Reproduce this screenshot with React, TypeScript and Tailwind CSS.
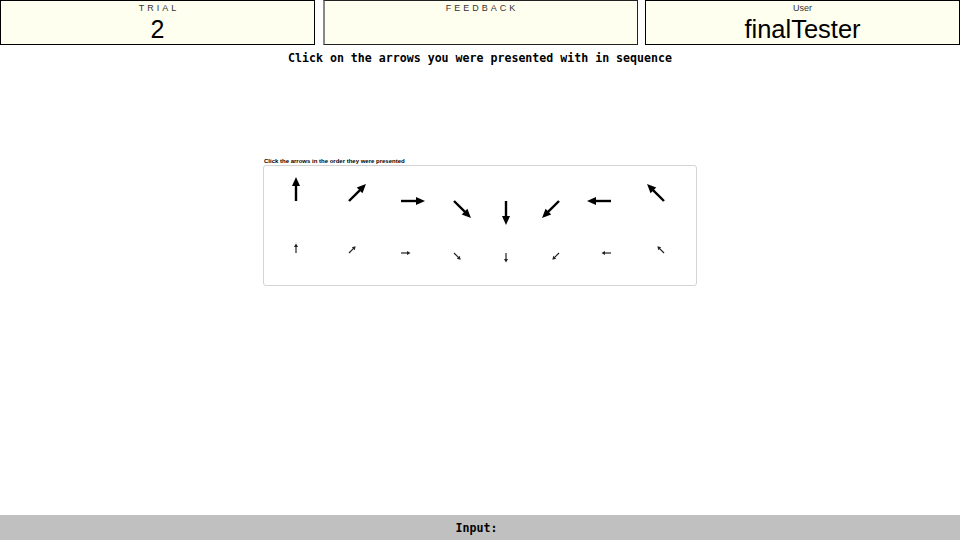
import React from "react";

const angles = [0, 45, 90, 135, 180, 225, 270, 315];

function Arrow({
  angle,
  len,
  head,
  headW,
  stroke,
  w,
  h,
  color,
}: {
  angle: number;
  len: number;
  head: number;
  headW: number;
  stroke: number;
  w: number;
  h: number;
  color: string;
}) {
  return (
    <svg width={w} height={h} viewBox={`${-w / 2} ${-h / 2} ${w} ${h}`}>
      <g transform={`rotate(${angle})`}>
        <line x1={0} y1={0} x2={0} y2={-(len - head + 0.5)} stroke={color} strokeWidth={stroke} />
        <polygon
          points={`0,${-len} ${-headW / 2},${-len + head} ${headW / 2},${-len + head}`}
          fill={color}
        />
      </g>
    </svg>
  );
}

export default function App() {
  return (
    <div className="min-h-screen flex flex-col bg-white" style={{ fontFamily: "'Liberation Sans', Arial, sans-serif" }}>
      <div className="flex justify-between h-[45px]">
        <div className="w-[315px] h-[45px] border border-black bg-[#fffff0] flex flex-col items-center">
          <div className="text-[9px] leading-[12px] tracking-[3px] text-[#333] mt-[1px] pl-[3px]">TRIAL</div>
          <div className="text-[25px] leading-[26px] text-black mt-[2px]">2</div>
        </div>
        <div className="w-[315px] h-[45px] border border-[#222] border-l-2 border-l-[#888] bg-[#fffff0] flex flex-col items-center">
          <div className="text-[9px] leading-[12px] tracking-[3px] text-[#333] mt-[1px] pl-[3px]">FEEDBACK</div>
        </div>
        <div className="w-[315px] h-[45px] border border-black bg-[#fffff0] flex flex-col items-center">
          <div className="text-[9px] leading-[12px] text-[#333] mt-[1px]">User</div>
          <div className="text-[25.5px] leading-[26px] text-black mt-[2px]">finalTester</div>
        </div>
      </div>

      <div
        className="mt-[5px] text-center font-bold text-[11.6px] leading-[16px] text-black"
        style={{ fontFamily: "'DejaVu Sans Mono', 'Liberation Mono', monospace" }}
      >
        Click on the arrows you were presented with in sequence
      </div>

      <div className="mt-[90px] self-center w-[434px]">
        <div className="text-[6px] leading-[8px] pt-[1px] font-bold text-black pl-[1px]">
          Click the arrows in the order they were presented
        </div>
        <div className="border border-[#d4d4d4] rounded-[3px] px-[6px] pt-[10px] pb-[22px]">
          <div className="grid grid-cols-8">
            {angles.map((a) => (
              <div key={"b" + a} className="flex justify-center">
                <Arrow angle={a} len={24} head={9} headW={8} stroke={2.4} w={50} h={50} color="#000" />
              </div>
            ))}
          </div>
          <div className="grid grid-cols-8 mt-[17px]">
            {angles.map((a) => (
              <div key={"s" + a} className="flex justify-center">
                <Arrow angle={a} len={9.5} head={3.5} headW={4} stroke={1.2} w={24} h={20} color="#222" />
              </div>
            ))}
          </div>
        </div>
      </div>

      <div
        className="mt-auto h-[25px] pt-[2px] bg-[#c0c0c0] flex items-center justify-center font-bold text-[11.6px] text-black"
        style={{ fontFamily: "'DejaVu Sans Mono', 'Liberation Mono', monospace" }}
      >
        Input:{"\u00a0"}
      </div>
    </div>
  );
}
